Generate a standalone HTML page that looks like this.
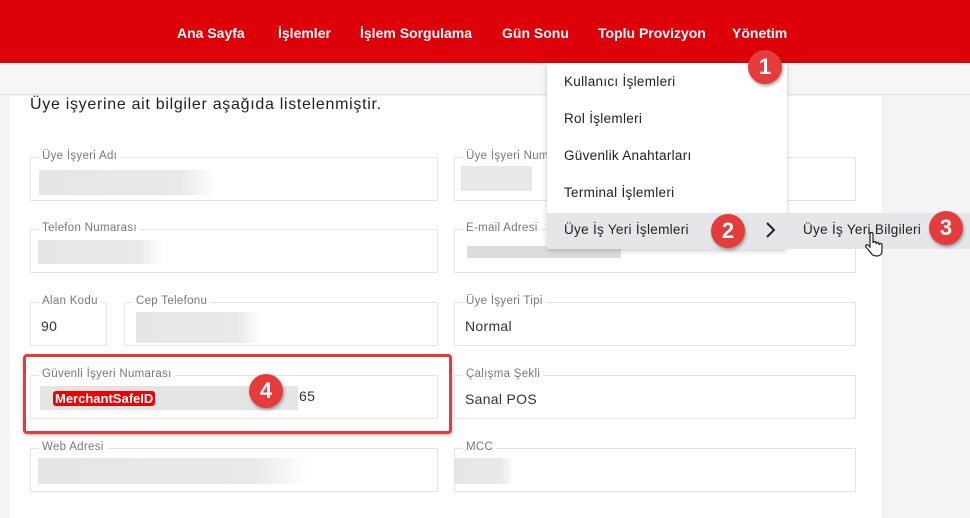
<!DOCTYPE html>
<html><head><meta charset="utf-8"><style>
*{margin:0;padding:0;box-sizing:border-box}
body{width:970px;height:518px;overflow:hidden;background:#f4f4f6;font-family:"Liberation Sans",sans-serif;position:relative;color:#222}
.hdr{position:absolute;left:0;top:0;width:970px;height:63px;background:#dd0008}
.nav{position:absolute;top:25px;color:#fff;font-weight:bold;font-size:14px}
.bar{position:absolute;left:0;top:63px;width:970px;height:32px;background:#f6f6f6;border-bottom:1px solid #ddd}
.main{position:absolute;left:10px;top:96px;width:872px;height:422px;background:#fff}
.title{position:absolute;left:30px;top:96px;font-size:16px;letter-spacing:0.7px;color:#222}
.f{position:absolute;border:1px solid #e4e4e4;height:44px}
.f .l{position:absolute;left:8px;top:-8px;background:#fff;padding:0 3px;font-size:11.5px;color:#777;letter-spacing:0.3px}
.f .v{position:absolute;left:10px;top:15px;font-size:14px;color:#333;letter-spacing:0.3px}
.blur{position:absolute;background:linear-gradient(90deg,#e6e6e6,#e9e9e9 80%,#fff);height:25px}
.dd{position:absolute;left:547px;top:63px;width:240px;height:186px;background:#fff;box-shadow:0 2px 5px rgba(0,0,0,.2)}
.di{position:absolute;left:564px;font-size:13.5px;color:#222;letter-spacing:0.3px}
.hl{position:absolute;left:547px;top:213px;width:423px;height:36px;background:#e6e6ea}
.c{position:absolute;width:34px;height:34px;border-radius:50%;background:#e43b3b;color:#fff;font-weight:bold;font-size:22px;text-align:center;line-height:34px;box-shadow:1px 2px 3px rgba(0,0,0,.35)}
</style></head><body>
<div class="hdr"></div>
<div class="nav" style="left:177px">Ana Sayfa</div>
<div class="nav" style="left:278px">İşlemler</div>
<div class="nav" style="left:360px">İşlem Sorgulama</div>
<div class="nav" style="left:502px">Gün Sonu</div>
<div class="nav" style="left:598px">Toplu Provizyon</div>
<div class="nav" style="left:732px">Yönetim</div>
<div class="bar"></div>
<div class="main"></div>
<div class="title">Üye işyerine ait bilgiler aşağıda listelenmiştir.</div>

<div class="f" style="left:30px;top:157px;width:408px"><span class="l">Üye İşyeri Adı</span></div>
<div class="blur" style="left:39px;top:170px;width:177px"></div>
<div class="f" style="left:454px;top:157px;width:402px"><span class="l">Üye İşyeri Numarası</span></div>
<div class="blur" style="left:461px;top:166px;width:71px;background:#e8e8e8"></div>

<div class="f" style="left:30px;top:229px;width:408px"><span class="l">Telefon Numarası</span></div>
<div class="blur" style="left:38px;top:240px;width:125px;height:24px"></div>
<div class="f" style="left:454px;top:229px;width:402px"><span class="l">E-mail Adresi</span></div>
<div class="blur" style="left:467px;top:246px;width:154px;height:12px;background:#ddd"></div>

<div class="f" style="left:30px;top:302px;width:77px"><span class="l">Alan Kodu</span><span class="v">90</span></div>
<div class="f" style="left:124px;top:302px;width:314px"><span class="l">Cep Telefonu</span></div>
<div class="blur" style="left:136px;top:312px;width:126px;height:31px"></div>
<div class="f" style="left:454px;top:302px;width:402px"><span class="l">Üye İşyeri Tipi</span><span class="v">Normal</span></div>

<div style="position:absolute;left:23px;top:354px;width:429px;height:80px;border:3px solid #e43b3b;border-radius:4px;box-shadow:0 1px 3px rgba(0,0,0,.3)"></div>
<div class="f" style="left:30px;top:375px;width:408px"><span class="l">Güvenli İşyeri Numarası</span><span class="v" style="left:268px;top:12px">65</span></div>
<div class="blur" style="left:40px;top:386px;width:258px;height:24px;background:#e4e4e4"></div>
<div style="position:absolute;left:53px;top:391px;background:#e00;color:#fff;font-weight:bold;font-size:13px;padding:0 2px;border-radius:3px;line-height:15px">MerchantSafeID</div>
<div class="f" style="left:454px;top:375px;width:402px"><span class="l">Çalışma Şekli</span><span class="v">Sanal POS</span></div>

<div class="f" style="left:30px;top:448px;width:408px"><span class="l">Web Adresi</span></div>
<div class="blur" style="left:38px;top:458px;width:270px;height:26px"></div>
<div class="f" style="left:454px;top:448px;width:402px"><span class="l">MCC</span></div>
<div class="blur" style="left:455px;top:458px;width:58px;height:26px"></div>

<div class="dd"></div>
<div class="hl"></div>
<div class="di" style="top:74px">Kullanıcı İşlemleri</div>
<div class="di" style="top:111px">Rol İşlemleri</div>
<div class="di" style="top:148px">Güvenlik Anahtarları</div>
<div class="di" style="top:185px">Terminal İşlemleri</div>
<div class="di" style="top:222px">Üye İş Yeri İşlemleri</div>
<svg style="position:absolute;left:764px;top:221px" width="14" height="18"><path d="M3 2 L10 9 L3 16" stroke="#222" stroke-width="2" fill="none"/></svg>
<div class="di" style="top:222px;left:803px">Üye İş Yeri Bilgileri</div>
<svg style="position:absolute;left:864px;top:232px" width="20" height="26"><path d="M6 2v13l-2-2c-2-1-3 1-2 2l5 6c1 2 3 3 6 3 3 0 5-2 5-5v-6c0-2-3-2-3 0v-1c0-2-3-2-3 0v-1c0-2-3-2-3 0V2c0-2-3-2-3 0z" fill="#fff" stroke="#222" stroke-width="1.2"/></svg>

<div class="c" style="left:748px;top:50px">1</div>
<div class="c" style="left:711px;top:214px">2</div>
<div class="c" style="left:929px;top:211px">3</div>
<div class="c" style="left:249px;top:374px">4</div>
</body></html>
